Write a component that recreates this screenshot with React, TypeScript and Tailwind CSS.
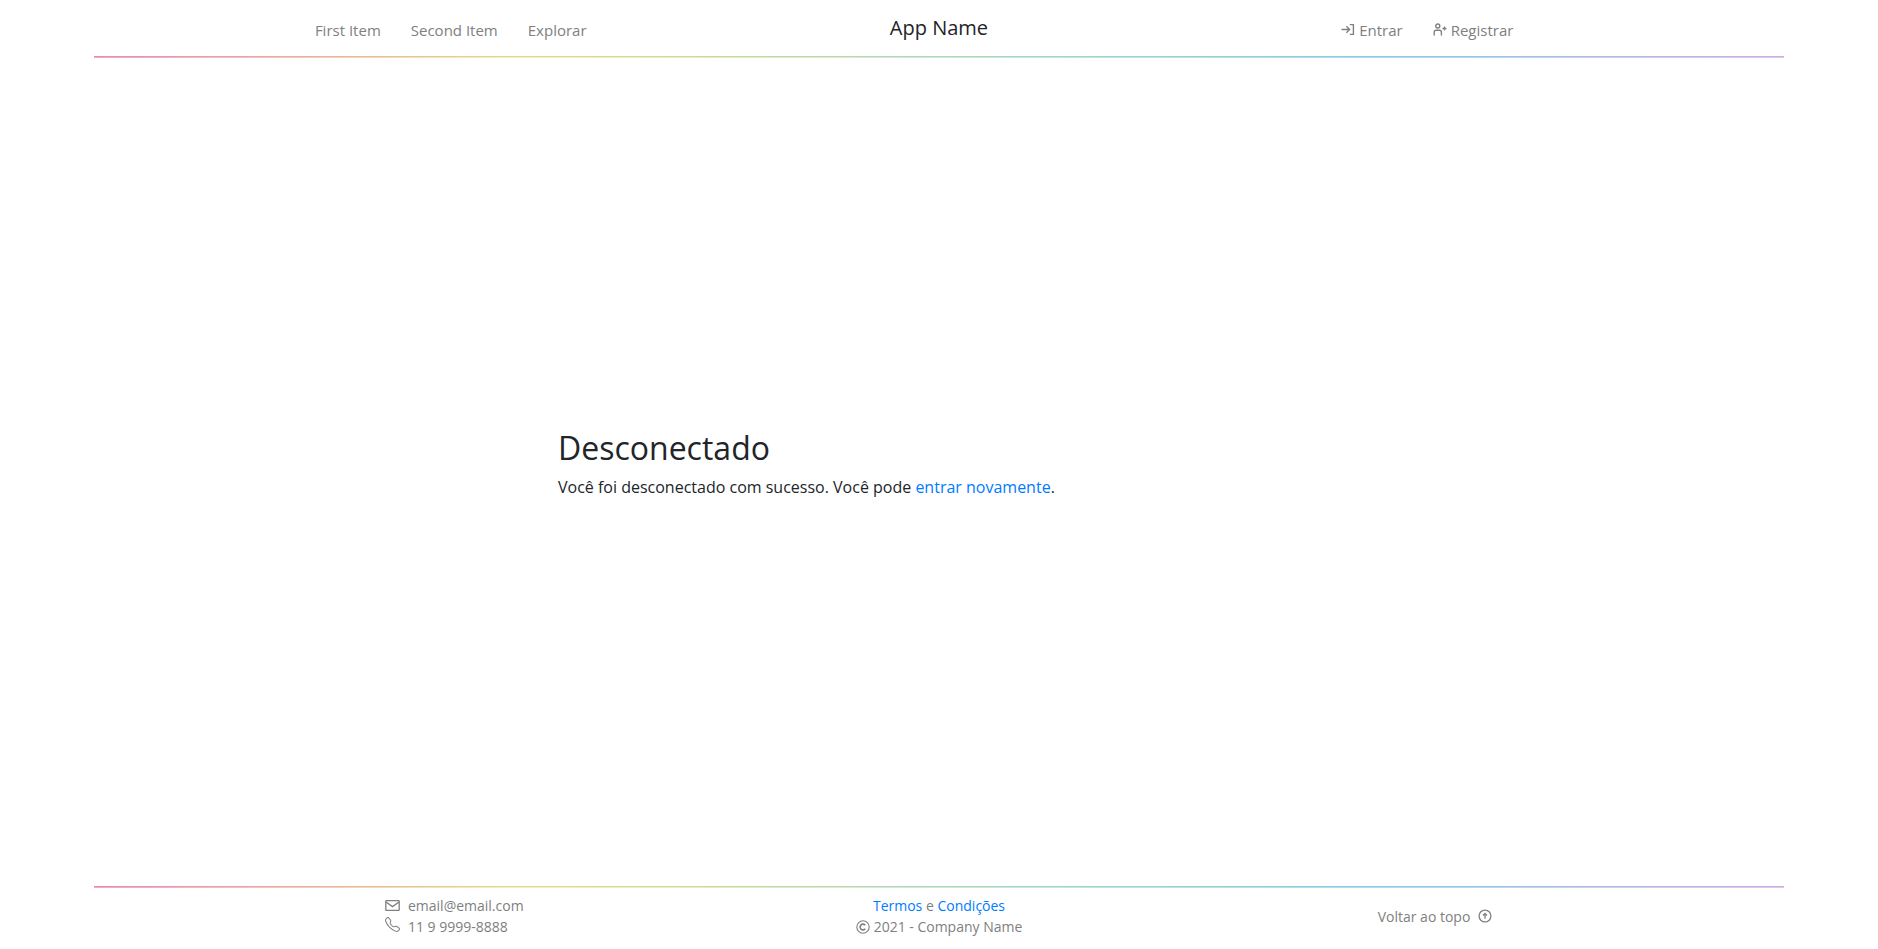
import type { ReactNode } from "react";
import { BsTelephone } from "react-icons/bs";

function SignInIcon() {
  return (
    <svg width="14" height="14" viewBox="0 0 14 14" fill="none" stroke="currentColor" strokeWidth="1.4" aria-hidden="true">
      <path d="M0.5 6.5H8.6M5.4 3.3L8.6 6.5L5.4 9.7M8.8 1.6H12.4V11.4H8.8" />
    </svg>
  );
}

function PersonPlusIcon() {
  return (
    <svg width="14" height="14" viewBox="0 0 14 14" fill="none" stroke="currentColor" strokeWidth="1.4" aria-hidden="true">
      <circle cx="4.8" cy="3" r="2" />
      <path d="M1.2 12.4V9.2Q1.2 7.2 3.2 7.2H6.4Q8.4 7.2 8.4 9.2V12.4M11.5 3.5V7.5M9.5 5.5H13.5" />
    </svg>
  );
}

function EnvelopeIcon() {
  return (
    <svg width="15" height="15" viewBox="0 0 15 15" fill="none" stroke="currentColor" strokeWidth="1.3" aria-hidden="true">
      <rect x="0.8" y="2.6" width="13.4" height="9.8" rx="0.6" />
      <path d="M1 4L7.5 8.6L14 4" />
    </svg>
  );
}

function CopyrightIcon() {
  return (
    <svg width="14" height="14" viewBox="0 0 14 14" fill="none" stroke="currentColor" strokeWidth="1.1" aria-hidden="true">
      <circle cx="7" cy="7" r="6.2" />
      <path d="M9.3 5.2A2.9 2.9 0 1 0 9.3 8.8" strokeWidth="1.6" />
    </svg>
  );
}

function ArrowUpCircleIcon() {
  return (
    <svg width="14" height="14" viewBox="0 0 14 14" fill="none" stroke="currentColor" strokeWidth="1.3" aria-hidden="true">
      <circle cx="7" cy="7" r="5.9" />
      <path d="M7 9.8V4.8M5 6.5L7 4.5L9 6.5" />
    </svg>
  );
}

function Rule() {
  return (
    <hr className="mx-auto h-0.5 w-[90%] border-0 border-t border-black/10 bg-[linear-gradient(to_right,#fba0c6,#f8f2ac_25%,#c8edd2_50%,#a4e0f5_75%,#dfc6f5)]" />
  );
}

function NavLink({ children }: { children: ReactNode }) {
  return (
    <a href="#" className="flex items-center gap-1 text-[15px] leading-6 text-[#808080] hover:text-[#212529]">
      {children}
    </a>
  );
}

export default function App() {
  return (
    <div id="top" className="flex min-h-screen flex-col bg-white font-['Open_Sans',sans-serif] text-base text-[#212529]">
      <header>
        <nav className="mx-auto grid w-[78%] grid-cols-3 py-3.5">
          <div className="flex items-center justify-center gap-[30px] pt-1">
            <NavLink>First Item</NavLink>
            <NavLink>Second Item</NavLink>
            <NavLink>Explorar</NavLink>
          </div>
          <a href="#" className="text-center text-xl leading-7">
            App Name
          </a>
          <div className="flex items-center justify-center gap-[30px] pt-1">
            <NavLink>
              <SignInIcon />
              Entrar
            </NavLink>
            <NavLink>
              <PersonPlusIcon />
              Registrar
            </NavLink>
          </div>
        </nav>
        <Rule />
      </header>

      <main className="mx-auto flex w-full max-w-[762px] flex-1 flex-col justify-center">
        <h1 className="mb-2 text-[32px] leading-[38px]">Desconectado</h1>
        <p className="mb-4 leading-6">
          Você foi desconectado com sucesso. Você pode{" "}
          <a href="#" className="text-[#007bff] hover:underline">
            entrar novamente
          </a>
          .
        </p>
      </main>

      <footer className="text-sm leading-[21px] text-[#808080]">
        <Rule />
        <div className="mx-auto grid w-[77%] grid-cols-3 items-center pt-[7px] pb-3">
          <address className="mx-auto w-36 not-italic">
            <div className="flex items-center gap-2">
              <EnvelopeIcon />
              email@email.com
            </div>
            <div className="flex items-center gap-2">
              <BsTelephone size={15} className="mb-1" aria-hidden="true" />
              11 9 9999-8888
            </div>
          </address>
          <div className="text-center">
            <p>
              <a href="#" className="text-[#007bff] hover:underline">
                Termos
              </a>{" "}
              e{" "}
              <a href="#" className="text-[#007bff] hover:underline">
                Condições
              </a>
            </p>
            <p className="flex items-center justify-center gap-1">
              <CopyrightIcon />
              2021 - Company Name
            </p>
          </div>
          <a href="#top" className="flex items-center justify-center gap-2 pl-7">
            Voltar ao topo
            <ArrowUpCircleIcon />
          </a>
        </div>
      </footer>
    </div>
  );
}
